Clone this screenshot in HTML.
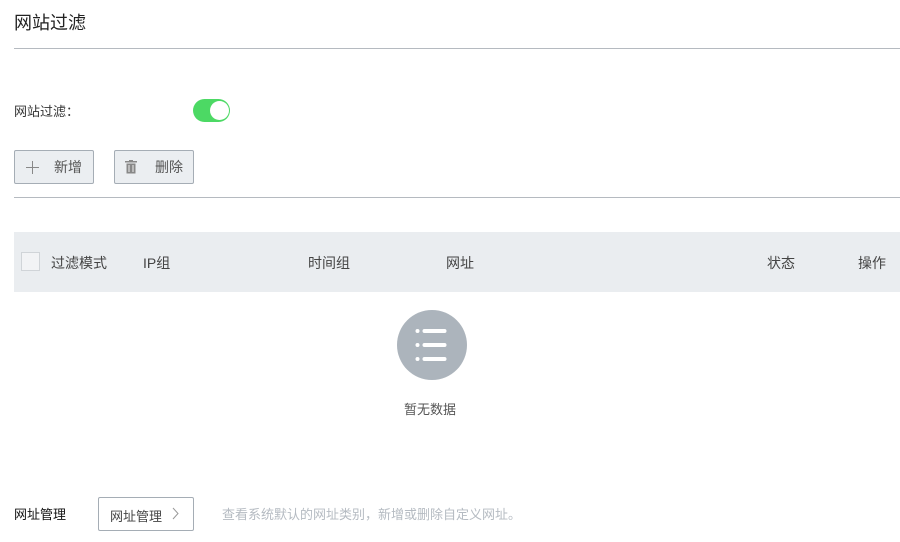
<!DOCTYPE html>
<html><head><meta charset="utf-8"><style>
*{margin:0;padding:0;box-sizing:border-box}
body{width:900px;height:542px;background:#fff;font-family:"Liberation Sans","Noto Sans CJK SC",sans-serif;color:#333;position:relative;overflow:hidden}
.a{position:absolute;white-space:nowrap}
.btn{position:absolute;border:1px solid #a5adb5;background:#ebeef1;border-radius:2px;font-size:14px;color:#555}
</style></head><body>
<div class="a" style="left:14px;top:9px;font-size:18px;color:#222">网站过滤</div>
<div class="a" style="left:14px;top:48px;width:886px;height:1px;background:#b5bac0"></div>
<div class="a" style="left:14px;top:101px;font-size:13px;color:#333">网站过滤：</div>
<div class="a" style="left:193px;top:99px;width:37px;height:23px;border-radius:12px;background:#4cd964"></div>
<div class="a" style="left:210px;top:101px;width:19px;height:19px;border-radius:50%;background:#fff"></div>
<div class="btn" style="left:14px;top:150px;width:80px;height:34px">
<svg class="a" style="left:11px;top:10px" width="13" height="13" viewBox="0 0 13 13"><path d="M6.5 0V13M0 6.5H13" stroke="#888" stroke-width="1"/></svg>
<span class="a" style="left:39px;top:6px">新增</span></div>
<div class="btn" style="left:114px;top:150px;width:80px;height:34px">
<svg class="a" style="left:10px;top:9px" width="12" height="14" viewBox="0 0 12 14"><rect x="0" y="1" width="12" height="1.5" fill="#888"/><rect x="4" y="0" width="4" height="1.5" fill="#888"/><rect x="1.5" y="3.5" width="9" height="10" fill="#888"/><rect x="3.5" y="5" width="1" height="7" fill="#eee"/><rect x="7.5" y="5" width="1" height="7" fill="#eee"/></svg>
<span class="a" style="left:40px;top:6px">删除</span></div>
<div class="a" style="left:14px;top:197px;width:886px;height:1px;background:#b5bac0"></div>
<div class="a" style="left:14px;top:232px;width:886px;height:60px;background:#eaedf0"></div>
<div class="a" style="left:21px;top:252px;width:19px;height:19px;border:1px solid #d0d4d8;background:#f2f3f5"></div>
<div class="a" style="left:51px;top:253px;font-size:14px;color:#444">过滤模式</div>
<div class="a" style="left:143px;top:253px;font-size:14px;color:#444">IP组</div>
<div class="a" style="left:308px;top:253px;font-size:14px;color:#444">时间组</div>
<div class="a" style="left:446px;top:253px;font-size:14px;color:#444">网址</div>
<div class="a" style="left:767px;top:253px;font-size:14px;color:#444">状态</div>
<div class="a" style="left:858px;top:253px;font-size:14px;color:#444">操作</div>
<div class="a" style="left:397px;top:310px;width:70px;height:70px;border-radius:50%;background:#acb4bc"></div>
<svg class="a" style="left:413px;top:326px" width="40" height="40" viewBox="0 0 40 40"><g fill="#fff"><circle cx="4.5" cy="5" r="2"/><circle cx="4.5" cy="19" r="2"/><circle cx="4.5" cy="33" r="2"/><rect x="9.5" y="3" width="24" height="4" rx="2"/><rect x="9.5" y="17" width="24" height="4" rx="2"/><rect x="9.5" y="31" width="24" height="4" rx="2"/></g></svg>
<div class="a" style="left:404px;top:399px;font-size:13px;color:#555">暂无数据</div>
<div class="a" style="left:14px;top:504px;font-size:13px;color:#111">网址管理</div>
<div class="a" style="left:98px;top:497px;width:96px;height:34px;border:1px solid #a5adb5;border-radius:2px"></div>
<div class="a" style="left:110px;top:506px;font-size:13px;color:#444">网址管理</div>
<svg class="a" style="left:172px;top:507px" width="7" height="13" viewBox="0 0 7 13"><path d="M1 1L6 6.5L1 12" stroke="#999" stroke-width="1" fill="none"/></svg>
<div class="a" style="left:222px;top:504px;font-size:13px;color:#b5bbc2">查看系统默认的网址类别，新增或删除自定义网址。</div>
</body></html>
